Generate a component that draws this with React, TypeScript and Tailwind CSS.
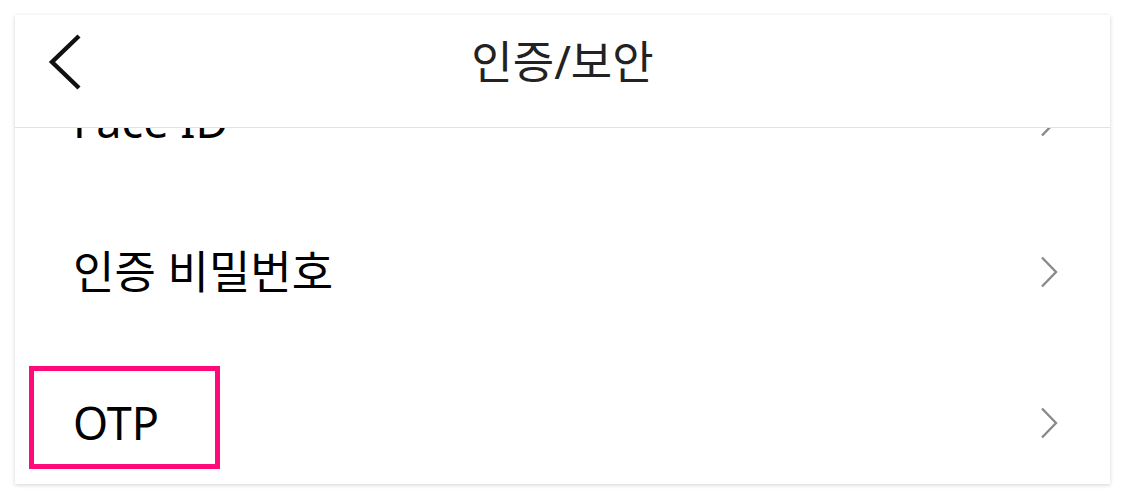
const FONT = "font-['Noto_Sans','Noto_Sans_CJK_KR',sans-serif]";

const rows = ["Face ID", "인증 비밀번호", "OTP"];

function Chevron() {
  return (
    <svg width="18" height="32" viewBox="0 0 18 32" className="shrink-0">
      <polyline points="2,1.5 16,16 2,30.5" fill="none" stroke="#8a8a8a" strokeWidth="2.4" />
    </svg>
  );
}

export default function App() {
  return (
    <div className={`min-h-screen bg-white p-[15px] ${FONT}`}>
      <div className="relative flex h-[469px] flex-col overflow-hidden bg-white shadow-[0_1px_4px_rgba(0,0,0,0.18)]">
        <header className="relative z-10 flex h-[113px] shrink-0 items-start border-b border-[#e2e2e2] bg-white">
          <button className="ml-[30px] mt-[18px] flex h-[58px] w-[40px] items-center justify-center">
            <svg width="36" height="58" viewBox="0 0 36 58">
              <polyline points="32,3 5,29 32,55" fill="none" stroke="#111" strokeWidth="4.4" />
            </svg>
          </button>
          <h1 className="absolute left-0 right-0 top-[18px] text-center text-[45px] leading-[58px] text-[#222]">
            인증/보안
          </h1>
        </header>
        <div className="flex-1 overflow-hidden">
          <ul className="-mt-[83px]">
            {rows.map((label) => (
              <li key={label} className="flex h-[151px] items-center justify-between pl-[58px] pr-[52px]">
                <span className="text-[45px] leading-none text-black">{label}</span>
                <Chevron />
              </li>
            ))}
          </ul>
        </div>
        <div className="pointer-events-none absolute left-[14px] top-[351px] h-[103px] w-[191px] border-[5px] border-[#ff0a78]" />
      </div>
    </div>
  );
}
